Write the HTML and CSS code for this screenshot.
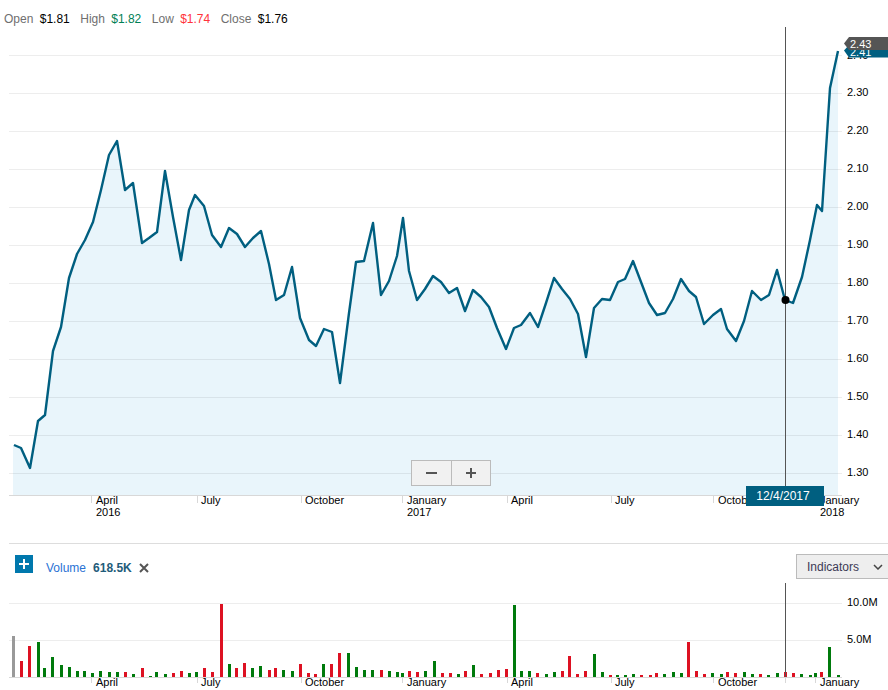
FILE: index.html
```html
<!DOCTYPE html>
<html lang="en">
  <head>
    <meta charset="UTF-8" />
    <meta name="viewport" content="width=device-width, initial-scale=1.0" />
    <title>Price chart</title>
    <link rel="stylesheet" href="styles.css">
  </head>
  <body>
    <header class="quote">
      <p class="quote-item"><span>Open</span> <b class="dark">$1.81</b></p>
      <p class="quote-item"><span>High</span> <b class="up">$1.82</b></p>
      <p class="quote-item"><span>Low</span> <b class="down">$1.74</b></p>
      <p class="quote-item"><span>Close</span> <b class="dark">$1.76</b></p>
    </header>

    <main>
      <svg class="chart price-chart" viewBox="0 27 888 516" width="888" height="516">
        <path class="area" d="M14 445L21 448L30 468L38 421L45 415L53 351L61 327L69 278L77 254L85 240L93 222L101 190L109 155L117 141L125 190L133 183L142 243L149 238L157 232L165 171L173 217L181 260L189 210L195 195L204 206L212 235L221 247L229 228L237 234L245 247L253 238L261 231L269 264L276 300L284 295L292 267L300 318L309 340L316 346L324 329L332 332L340 383L349 313L356 262L364 261L373 223L381 295L389 281L397 256L403 218L409 271L417 300L425 289L433 276L441 282L449 293L457 288L465 311L473 290L481 297L489 307L497 328L506 349L514 328L521 325L530 313L538 327L546 303L554 278L562 289L570 299L578 314L586 357L594 308L602 299L610 300L618 282L625 279L633 261L641 282L649 303L657 315L665 313L673 299L681 279L689 291L696 297L704 324L713 315L721 309L727 329L736 341L744 321L752 291L761 300L769 295L777 270L785 300L793 303L802 277L810 240L817 205L822 211L830 88L838 51V495H13V445Z"/>
        <path class="grid" d="M9 55.5H842M9 93.5H842M9 131.5H842M9 169.5H842M9 207.5H842M9 245.5H842M9 283.5H842M9 321.5H842M9 359.5H842M9 397.5H842M9 435.5H842M9 473.5H842"/>
        <path class="axis" d="M9 495.5H842M91.5 495V503M197.5 495V503M301.5 495V503M402.5 495V503M507.5 495V503M611.5 495V503M713.5 495V503M815.5 495V503"/>
        <path class="line" d="M14 445L21 448L30 468L38 421L45 415L53 351L61 327L69 278L77 254L85 240L93 222L101 190L109 155L117 141L125 190L133 183L142 243L149 238L157 232L165 171L173 217L181 260L189 210L195 195L204 206L212 235L221 247L229 228L237 234L245 247L253 238L261 231L269 264L276 300L284 295L292 267L300 318L309 340L316 346L324 329L332 332L340 383L349 313L356 262L364 261L373 223L381 295L389 281L397 256L403 218L409 271L417 300L425 289L433 276L441 282L449 293L457 288L465 311L473 290L481 297L489 307L497 328L506 349L514 328L521 325L530 313L538 327L546 303L554 278L562 289L570 299L578 314L586 357L594 308L602 299L610 300L618 282L625 279L633 261L641 282L649 303L657 315L665 313L673 299L681 279L689 291L696 297L704 324L713 315L721 309L727 329L736 341L744 321L752 291L761 300L769 295L777 270L785 300L793 303L802 277L810 240L817 205L822 211L830 88L838 51"/>

        <text class="label" x="847" y="59">2.40</text>
        <text class="label" x="847" y="96">2.30</text>
        <text class="label" x="847" y="134">2.20</text>
        <text class="label" x="847" y="172">2.10</text>
        <text class="label" x="847" y="210">2.00</text>
        <text class="label" x="847" y="248">1.90</text>
        <text class="label" x="847" y="286">1.80</text>
        <text class="label" x="847" y="324">1.70</text>
        <text class="label" x="847" y="362">1.60</text>
        <text class="label" x="847" y="400">1.50</text>
        <text class="label" x="847" y="438">1.40</text>
        <text class="label" x="847" y="476">1.30</text>

        <text class="label" x="96" y="504">April</text>
        <text class="label" x="96" y="516">2016</text>
        <text class="label" x="201" y="504">July</text>
        <text class="label" x="305" y="504">October</text>
        <text class="label" x="407" y="504">January</text>
        <text class="label" x="407" y="516">2017</text>
        <text class="label" x="511" y="504">April</text>
        <text class="label" x="615" y="504">July</text>
        <text class="label" x="718" y="504">October</text>
        <text class="label" x="820" y="504">January</text>
        <text class="label" x="820" y="516">2018</text>

        <path class="crosshair" d="M785.5 27V487"/>
        <circle class="marker" cx="785.5" cy="300" r="4"/>

        <path class="flag-blue" d="M844 50.5L849 45H888V57.5H849Z"/>
        <text class="flag-text" x="850" y="56">2.41</text>
        <path class="flag-grey" d="M844 43.5L849 37H888V50H849Z"/>
        <text class="flag-text" x="850" y="48">2.43</text>

        <g class="zoom-buttons">
          <rect class="zoom-box" x="411.5" y="460.5" width="79" height="25"/>
          <path class="zoom-divider" d="M451.5 460V486"/>
          <path class="zoom-icon" d="M426 473H437M466 473H476M471 468V478"/>
        </g>

        <rect class="date-box" x="746" y="486" width="78" height="20"/>
        <text class="date-text" x="783" y="500">12/4/2017</text>
      </svg>

      <section class="volume-bar">
        <button class="add-btn" aria-label="Add">
          <svg viewBox="0 0 18 18" width="18" height="18"><path class="add-icon" d="M9 4V14M4 9H14"/></svg>
        </button>
        <div class="volume-info">
          <span class="volume-name">Volume</span>
          <strong class="volume-value">618.5K</strong>
          <svg viewBox="0 0 10 10" width="10" height="10"><path class="close-icon" d="M1 1L9 9M9 1L1 9"/></svg>
        </div>
        <button class="indicators">
          Indicators
          <svg viewBox="0 0 10 6" width="10" height="6"><path class="chevron" d="M1 1L5 5L9 1"/></svg>
        </button>
      </section>

      <svg class="chart volume-chart" viewBox="0 583 888 107" width="888" height="107">
        <path class="grid" d="M9 603.5H842M9 640.5H842"/>
        <path class="axis" d="M9 677.5H842M91.5 677V683M197.5 677V683M301.5 677V683M402.5 677V683M507.5 677V683M611.5 677V683M713.5 677V683M785.5 677V683M815.5 677V683"/>
        <path class="bar-grey" d="M13.5 677V636"/>
        <path class="bar-red" d="M21.5 677V661M29.5 677V646M125.5 677V672M142.5 677V668M173.5 677V673M181.5 677V671M204.5 677V668M212.5 677V672M221.5 677V604M236.5 677V668M244.5 677V663M269.5 677V670M275.5 677V668M300.5 677V664M308.5 677V673M315.5 677V674M331.5 677V664M339.5 677V653M381.5 677V670M409.5 677V671M417.5 677V672M442.5 677V673M450.5 677V673M465.5 677V671M481.5 677V674M490.5 677V673M498.5 677V670M506.5 677V669M537.5 677V673M562.5 677V671M569.5 677V656M577.5 677V674M585.5 677V671M610.5 677V675M641.5 677V675M650.5 677V675M656.5 677V673M688.5 677V642M696.5 677V671M704.5 677V674M727.5 677V672M735.5 677V673M760.5 677V674M785.5 677V672M793.5 677V673M821.5 677V672"/>
        <path class="bar-green" d="M38.5 677V642M44.5 677V668M52.5 677V657M61.5 677V665M69.5 677V667M77.5 677V671M84.5 677V671M92.5 677V673M100.5 677V671M109.5 677V672M117.5 677V672M133.5 677V674M150.5 677V676M156.5 677V672M165.5 677V674M189.5 677V673M196.5 677V672M229.5 677V664M252.5 677V668M260.5 677V666M283.5 677V670M292.5 677V671M323.5 677V664M348.5 677V653M356.5 677V667M364.5 677V670M372.5 677V670M389.5 677V671M397.5 677V672M402.5 677V673M425.5 677V671M434.5 677V661M458.5 677V674M473.5 677V665M514.5 677V605M521.5 677V671M529.5 677V671M546.5 677V674M554.5 677V672M594.5 677V654M602.5 677V672M617.5 677V675M625.5 677V675M633.5 677V674M664.5 677V674M673.5 677V672M681.5 677V673M712.5 677V673M721.5 677V674M744.5 677V672M752.5 677V674M768.5 677V675M777.5 677V673M801.5 677V674M810.5 677V675M815.5 677V673M829.5 677V647M838.5 677V675"/>
        <path class="crosshair" d="M785.5 583V677"/>

        <text class="label" x="847" y="606">10.0M</text>
        <text class="label" x="847" y="643">5.0M</text>

        <text class="label" x="96" y="686">April</text>
        <text class="label" x="201" y="686">July</text>
        <text class="label" x="305" y="686">October</text>
        <text class="label" x="407" y="686">January</text>
        <text class="label" x="511" y="686">April</text>
        <text class="label" x="615" y="686">July</text>
        <text class="label" x="718" y="686">October</text>
        <text class="label" x="820" y="686">January</text>
      </svg>
    </main>
  </body>
</html>
```

FILE: styles.css
```css
html {
  box-sizing: border-box;
  font-family: "Liberation Sans", Arial, sans-serif;
  font-size: 12px;
}

*,
*:before,
*:after {
  box-sizing: inherit;
}

body {
  margin: 0;
  width: 888px;
  height: 690px;
  overflow: hidden;
  background-color: #fff;
}

.quote {
  display: flex;
  gap: 10.5px;
  height: 27px;
  padding: 12px 0 0 4px;
  line-height: 14px;
}

.quote-item {
  margin: 0;
  color: #6f6f6f;
}

.quote-item span {
  margin-right: 3px;
}

.quote-item b {
  font-weight: normal;
}

.dark {
  color: #000;
}

.up {
  color: #008055;
}

.down {
  color: #ff333a;
}

.chart {
  display: block;
}

.area {
  fill: #e9f5fb;
}

.grid {
  fill: none;
  stroke: rgba(0, 0, 0, 0.07);
  stroke-width: 1;
}

.axis {
  fill: none;
  stroke: #d8d8d8;
  stroke-width: 1;
}

.line {
  fill: none;
  stroke: #005f80;
  stroke-width: 2.4;
  stroke-linejoin: round;
}

.label {
  fill: #000;
  font-size: 11px;
}

.crosshair {
  fill: none;
  stroke: #555;
  stroke-width: 1;
}

.marker {
  fill: #000;
}

.flag-blue {
  fill: #005f80;
}

.flag-grey {
  fill: #555;
}

.flag-text {
  fill: #fff;
  font-size: 11px;
}

.zoom-box {
  fill: #f1f1f1;
  stroke: #bbb;
}

.zoom-divider {
  stroke: #bbb;
}

.zoom-icon {
  fill: none;
  stroke: #555;
  stroke-width: 2;
}

.date-box {
  fill: #005f80;
}

.date-text {
  fill: #fff;
  font-size: 12px;
  text-anchor: middle;
}

.volume-bar {
  display: flex;
  align-items: flex-start;
  height: 40px;
  margin-left: 9px;
  padding-left: 6px;
  border-top: 1px solid #ddd;
}

.add-btn {
  display: block;
  width: 18px;
  height: 18px;
  margin: 11px 13px 0 0;
  padding: 0;
  border: 0;
  background-color: #0078ad;
}

.add-btn svg {
  display: block;
}

.add-icon {
  fill: none;
  stroke: #fff;
  stroke-width: 2;
}

.volume-info {
  display: flex;
  align-items: center;
  gap: 7px;
  height: 14px;
  margin-top: 17px;
}

.volume-name {
  color: #2a72d4;
}

.volume-value {
  color: #1f5c7a;
}

.close-icon {
  fill: none;
  stroke: #555;
  stroke-width: 2;
}

.indicators {
  display: flex;
  align-items: center;
  justify-content: space-between;
  width: 92px;
  height: 25px;
  margin: 10px 0 0 auto;
  padding: 0 5px 0 10px;
  border: 1px solid #bbb;
  border-right: 0;
  background-color: #eee;
  color: #3d3a55;
  font-family: inherit;
  font-size: 12px;
}

.chevron {
  fill: none;
  stroke: #444;
  stroke-width: 1.5;
}

.bar-grey,
.bar-red,
.bar-green {
  fill: none;
  stroke-width: 3;
}

.bar-grey {
  stroke: #999;
}

.bar-red {
  stroke: #dd1122;
}

.bar-green {
  stroke: #007a0c;
}
```
